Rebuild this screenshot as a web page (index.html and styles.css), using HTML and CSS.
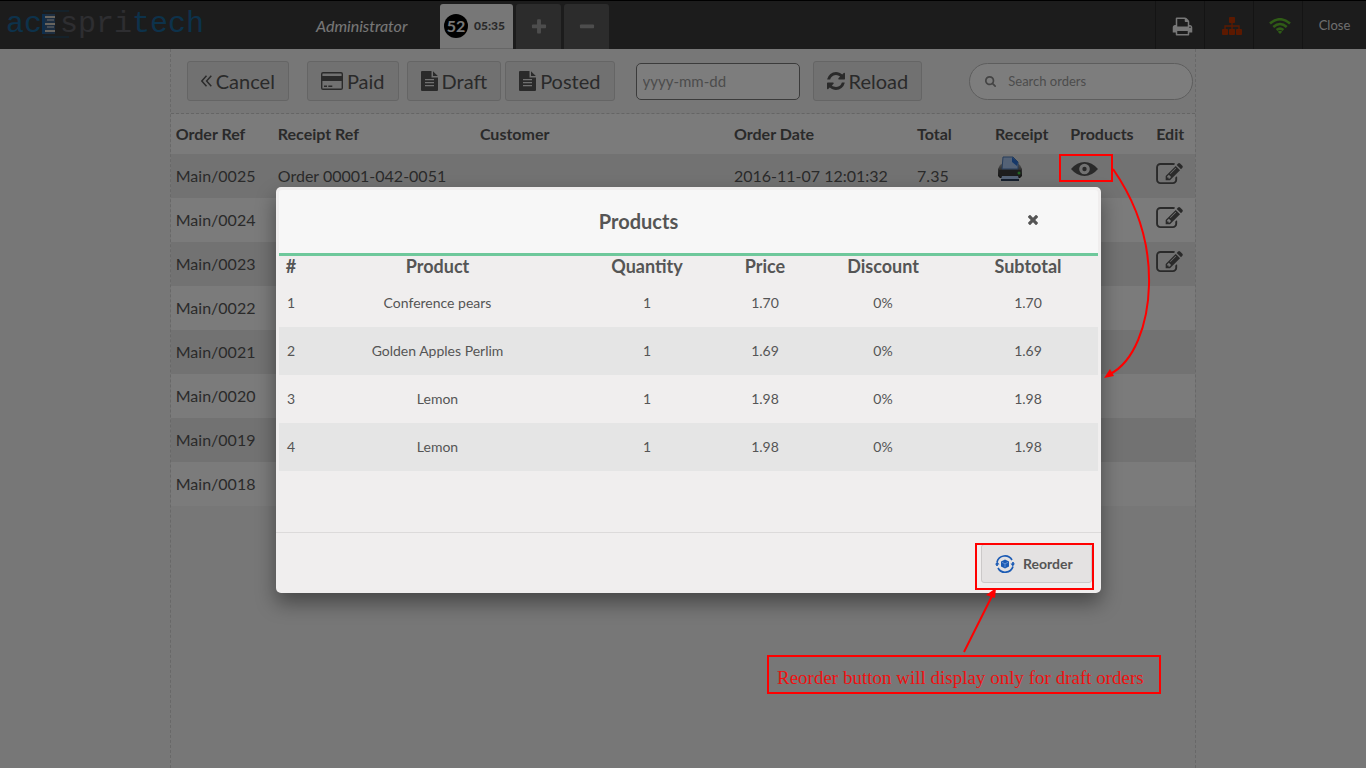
FILE: index.html
```html
<!DOCTYPE html>
<html lang="en">
<head>
<meta charset="utf-8">
<title>Point of Sale - Orders</title>
<link rel="stylesheet" href="styles.css">
</head>
<body>
<svg class="sprite" aria-hidden="true">
  <symbol id="i-plus" viewBox="0 0 1792 1792"><path d="M1600 736v192q0 40-28 68t-68 28h-416v416q0 40-28 68t-68 28h-192q-40 0-68-28t-28-68v-416h-416q-40 0-68-28t-28-68v-192q0-40 28-68t68-28h416v-416q0-40 28-68t68-28h192q40 0 68 28t28 68v416h416q40 0 68 28t28 68z"/></symbol>
  <symbol id="i-minus" viewBox="0 0 1792 1792"><path d="M1600 736v192q0 40-28 68t-68 28h-1216q-40 0-68-28t-28-68v-192q0-40 28-68t68-28h1216q40 0 68 28t28 68z"/></symbol>
  <symbol id="i-print" viewBox="0 0 1792 1792"><path d="M448 1536h896v-256h-896v256zm0-640h896v-384h-160q-40 0-68-28t-28-68v-160h-640v640zm1152 64q0-26-19-45t-45-19-45 19-19 45 19 45 45 19 45-19 19-45zm128 0v416q0 13-9.500 22.500t-22.500 9.500h-224v160q0 40-28 68t-68 28h-960q-40 0-68-28t-28-68v-160h-224q-13 0-22.500-9.500t-9.500-22.500v-416q0-79 56.500-135.500t135.500-56.500h64v-544q0-40 28-68t68-28h672q40 0 88 20t76 48l152 152q28 28 48 76t20 88v256h64q79 0 135.500 56.500t56.500 135.500z"/></symbol>
  <symbol id="i-edit" viewBox="0 128 1792 1536"><path d="M888 1184l116-116-152-152-116 116v56h96v96h56zm440-720q-16-16-33 1l-350 350q-17 17-1 33t33-1l350-350q17-17 1-33zm80 594v190q0 119-84.500 203.500t-203.500 84.500h-832q-119 0-203.500-84.500t-84.500-203.500v-832q0-119 84.500-203.500t203.500-84.500h832q63 0 117 25 15 7 18 23 3 17-9 29l-49 49q-14 14-32 8-23-6-45-6h-832q-66 0-113 47t-47 113v832q0 66 47 113t113 47h832q66 0 113-47t47-113v-126q0-13 9-22l64-64q15-15 35-7t20 29zm-96-738l288 288-672 672h-288v-288zm444 132l-92 92-288-288 92-92q28-28 68-28t68 28l152 152q28 28 28 68t-28 68z"/></symbol>
  <symbol id="i-refresh" viewBox="128 128 1536 1536"><path d="M1639 1056q0 5-1 7-64 268-268 434.500t-478 166.500q-146 0-282.500-55t-243.500-157l-129 129q-19 19-45 19t-45-19-19-45v-448q0-26 19-45t45-19h448q26 0 45 19t19 45-19 45l-137 137q71 66 161 102t187 36q134 0 250-65t186-179q11-17 53-117 8-23 30-23h192q13 0 22.500 9.500t9.500 22.500zm25-800v448q0 26-19 45t-45 19h-448q-26 0-45-19t-19-45 19-45l138-138q-148-137-349-137-134 0-250 65t-186 179q-11 17-53 117-8 23-30 23h-199q-13 0-22.500-9.500t-9.500-22.500v-7q65-268 270-434.500t480-166.500q146 0 284 55.500t245 156.500l130-129q19-19 45-19t45 19 19 45z"/></symbol>
  <symbol id="i-search" viewBox="64 128 1664 1664"><path d="M1216 832q0-185-131.500-316.500t-316.500-131.500-316.500 131.500-131.500 316.500 131.500 316.500 316.500 131.500 316.500-131.500 131.500-316.500zm512 832q0 52-38 90t-90 38q-54 0-90-38l-343-342q-179 124-399 124-143 0-273.500-55.500t-225-150-150-225-55.500-273.500 55.500-273.500 150-225 225-150 273.500-55.500 273.500 55.500 225 150 150 225 55.500 273.500q0 220-124 399l343 343q37 37 37 90z"/></symbol>
  <symbol id="i-times" viewBox="302 434 1188 1188"><path d="M1490 1322q0 40-28 68l-136 136q-28 28-68 28t-68-28l-294-294-294 294q-28 28-68 28t-68-28l-136-136q-28-28-28-68t28-68l294-294-294-294q-28-28-28-68t28-68l136-136q28-28 68-28t68 28l294 294 294-294q28-28 68-28t68 28l136 136q28 28 28 68t-28 68l-294 294 294 294q28 28 28 68z"/></symbol>
  <symbol id="i-sitemap" viewBox="0 0 20 18"><g><rect x="7" y="0" width="6" height="6" rx="1"/><rect x="0" y="12" width="6" height="6" rx="1"/><rect x="7" y="12" width="6" height="6" rx="1"/><rect x="14" y="12" width="6" height="6" rx="1"/></g><path d="M10 5v8M3 13V9h14v4" fill="none" stroke="currentColor" stroke-width="1.300"/></symbol>
  <symbol id="i-wifi" viewBox="0 0 22 16"><g fill="none" stroke="currentColor" stroke-width="2.600"><path d="M1 5.500Q11-3 21 5.500"/><path d="M4.300 8.900Q11 3.100 17.700 8.900"/><path d="M7.600 12Q11 9.300 14.400 12"/></g><path d="M8.800 13.700Q11 12 13.200 13.700L11 16z"/></symbol>
  <symbol id="i-angles" viewBox="0 0 11 12"><path d="M5.500 .7L.8 6l4.700 5.300M10.300 .7L5.600 6l4.700 5.300" fill="none" stroke="currentColor" stroke-width="1.500"/></symbol>
  <symbol id="i-card" viewBox="0 0 22 18"><path fill-rule="evenodd" d="M2 0h18a2 2 0 0 1 2 2v14a2 2 0 0 1-2 2H2a2 2 0 0 1-2-2V2a2 2 0 0 1 2-2zm-.6 4h19.200V2a.6.6 0 0 0-.6-.6H2a.6.6 0 0 0-.6.6zm0 5v7a.6.6 0 0 0 .6.600h18a.6.6 0 0 0 .6-.6V9zM3 13.500h3V15H3zm4.300 0h4V15h-4z"/></symbol>
  <symbol id="i-file" viewBox="0 0 17 20"><path fill-rule="evenodd" d="M1 0h9.500v6.500H17V19a1 1 0 0 1-1 1H1a1 1 0 0 1-1-1V1a1 1 0 0 1 1-1zm3 8v1.300h9V8zm0 3v1.300h9V11zm0 3v1.300h9V14z"/><path d="M12 .2L16.800 5H12z"/></symbol>
  <symbol id="i-eye" viewBox="0 0 27 14"><path fill-rule="evenodd" d="M0 7Q6 0 13.500 0T27 7Q21 14 13.500 14T0 7zm13.500-5.300a5.300 5.300 0 1 0 0 10.600 5.300 5.300 0 0 0 0-10.600z"/><circle cx="13.500" cy="7" r="2.200"/></symbol>
</svg>

<div class="pos">
  <header class="topbar">
    <div class="brand" aria-label="acespritech">
      <span class="blue">ac</span>
      <svg class="brand-mark" viewBox="0 0 28 28" aria-hidden="true">
        <path d="M1 1h26M1 27h26" stroke="#1c5076"/>
        <path d="M0 4h13v20H0z" fill="#385a80"/>
        <path d="M1 7h12M1 14h12M1 21h12" stroke="#d0c8bc" stroke-width="2"/>
        <path d="M5 10h7M5 17h7" stroke="#8b98aa" stroke-width="2"/>
        <path d="M0 4h3v20H0z" fill="#1d5c9a"/>
      </svg>
      <span class="gray">spri</span><span class="blue">tech</span>
    </div>
    <span class="user">Administrator</span>
    <nav class="tabs">
      <button class="tab tab-active"><span class="num">52</span><span class="time">05:35</span></button>
      <button class="tab" aria-label="New order"><svg class="ic18"><use href="#i-plus"/></svg></button>
      <button class="tab" aria-label="Delete order"><svg class="ic18"><use href="#i-minus"/></svg></button>
    </nav>
    <div class="status">
      <button class="cell print" aria-label="Print"><svg class="ic20"><use href="#i-print"/></svg></button>
      <button class="cell net" aria-label="Proxy"><svg class="ic-net"><use href="#i-sitemap"/></svg></button>
      <button class="cell wifi" aria-label="Connection"><svg class="ic-wifi"><use href="#i-wifi"/></svg></button>
      <button class="cell close">Close</button>
    </div>
  </header>

  <main class="orders">
    <div class="toolbar">
      <button class="btn cancel"><svg class="ic-angles"><use href="#i-angles"/></svg>Cancel</button>
      <button class="btn paid"><svg class="ic-card"><use href="#i-card"/></svg>Paid</button>
      <div class="pair">
        <button class="btn"><svg class="ic-file"><use href="#i-file"/></svg>Draft</button>
        <button class="btn"><svg class="ic-file"><use href="#i-file"/></svg>Posted</button>
      </div>
      <input class="date" type="text" placeholder="yyyy-mm-dd" aria-label="Order date">
      <button class="btn"><svg class="ic-refresh"><use href="#i-refresh"/></svg>Reload</button>
      <label class="search"><svg class="ic-search"><use href="#i-search"/></svg><input type="text" placeholder="Search orders" aria-label="Search orders"></label>
    </div>
    <table class="list">
      <colgroup><col class="c-ref"><col class="c-receipt"><col class="c-customer"><col class="c-date"><col class="c-total"><col class="c-print"><col class="c-products"><col class="c-edit"></colgroup>
      <thead><tr><th>Order Ref</th><th>Receipt Ref</th><th>Customer</th><th>Order Date</th><th>Total</th><th>Receipt</th><th>Products</th><th>Edit</th></tr></thead>
      <tbody>
        <tr><td>Main/0025</td><td>Order 00001-042-0051</td><td></td><td>2016-11-07 12:01:32</td><td>7.35</td>
          <td><button class="icon-btn receipt" aria-label="Print receipt"><svg viewBox="0 0 26 26" class="ic-receipt">
            <defs><linearGradient id="body" x2="0" y2="1"><stop offset="0" stop-color="#b0b0b0"/><stop offset=".5" stop-color="#555"/><stop offset="1" stop-color="#222"/></linearGradient></defs>
            <path d="M3 9l3-2h14l3 2 2 4v7l-2 2H3l-2-2v-7z" fill="url(#body)"/>
            <path d="M5 13L6 1h10l5 5v7z" fill="#a9c5ec" stroke="#4c79b5"/>
            <path d="M15 1v5l5 4 1-4z" fill="#2c71d2"/>
            <path d="M2 14h22v5l-1 2H3l-1-2z" fill="#3a3a3a"/>
            <path d="M5 20h16l1 3H4z" fill="#a9c5ec"/><path d="M4 24h18" stroke="#2b3d58" stroke-width="2"/>
            <circle cx="22" cy="17" r="1.500" fill="#47c847"/></svg></button></td>
          <td><button class="icon-btn eye" aria-label="Show products"><svg class="ic-eye"><use href="#i-eye"/></svg></button></td>
          <td><button class="icon-btn edit" aria-label="Edit"><svg class="ic-edit"><use href="#i-edit"/></svg></button></td></tr>
        <tr><td>Main/0024</td><td></td><td></td><td></td><td></td><td></td><td></td><td><button class="icon-btn edit" aria-label="Edit"><svg class="ic-edit"><use href="#i-edit"/></svg></button></td></tr>
        <tr><td>Main/0023</td><td></td><td></td><td></td><td></td><td></td><td></td><td><button class="icon-btn edit" aria-label="Edit"><svg class="ic-edit"><use href="#i-edit"/></svg></button></td></tr>
        <tr><td>Main/0022</td><td></td><td></td><td></td><td></td><td></td><td></td><td></td></tr>
        <tr><td>Main/0021</td><td></td><td></td><td></td><td></td><td></td><td></td><td></td></tr>
        <tr><td>Main/0020</td><td></td><td></td><td></td><td></td><td></td><td></td><td></td></tr>
        <tr><td>Main/0019</td><td></td><td></td><td></td><td></td><td></td><td></td><td></td></tr>
        <tr><td>Main/0018</td><td></td><td></td><td></td><td></td><td></td><td></td><td></td></tr>
      </tbody>
    </table>
  </main>
</div>

<div class="backdrop"></div>

<section class="popup" role="dialog" aria-labelledby="popup-title">
  <div class="popup-body">
    <header class="popup-head">
      <h2 id="popup-title">Products</h2>
      <button class="dismiss" aria-label="Close popup"><svg class="ic-times"><use href="#i-times"/></svg></button>
    </header>
    <table class="lines">
      <colgroup><col class="l-no"><col class="l-product"><col class="l-qty"><col class="l-price"><col class="l-disc"><col class="l-sub"></colgroup>
      <thead><tr><th>#</th><th>Product</th><th>Quantity</th><th>Price</th><th>Discount</th><th>Subtotal</th></tr></thead>
      <tbody>
        <tr><td>1</td><td>Conference pears</td><td>1</td><td>1.70</td><td>0%</td><td>1.70</td></tr>
        <tr><td>2</td><td>Golden Apples Perlim</td><td>1</td><td>1.69</td><td>0%</td><td>1.69</td></tr>
        <tr><td>3</td><td>Lemon</td><td>1</td><td>1.98</td><td>0%</td><td>1.98</td></tr>
        <tr><td>4</td><td>Lemon</td><td>1</td><td>1.98</td><td>0%</td><td>1.98</td></tr>
      </tbody>
    </table>
  </div>
  <footer class="popup-foot">
    <button class="reorder">
      <svg class="ic-reorder" viewBox="0 0 20 20" aria-hidden="true">
        <g fill="none" stroke="#1c5bb4" stroke-width="1.700"><path d="M2 8a8.200 8.200 0 0 1 15-2M18 8v2"/><path d="M18 12.500A8.200 8.200 0 0 1 3 14M2 12v-2"/></g>
        <path d="M15.500 9.500h4.500l-2.200 3zM0 10.500h4.500L2.200 7.500z" fill="#1c5bb4"/>
        <path d="M10 5.500l4 2v5l-4 2-4-2v-5z" fill="#1c5bb4"/><path d="M7 8.300l3 1.500 3-1.500M10 9.800v3.500" fill="none" stroke="#6e9bdb" stroke-width=".8"/>
      </svg>Reorder</button>
  </footer>
</section>

<div class="notes">
  <svg class="marks" viewBox="0 0 1366 768" aria-hidden="true">
    <g fill="none" stroke="red" stroke-width="2">
      <rect x="1060" y="155" width="52" height="26"/>
      <rect x="976" y="544" width="117" height="45"/>
      <path d="M1113 169C1138 205 1150 245 1149 285C1148 325 1134 362 1110 374"/>
      <path d="M964 652L992 596"/>
    </g>
    <path d="M1104 378L1110 369 1114 376z" fill="red"/>
    <path d="M996 588L986 595 995 598z" fill="red"/>
  </svg>
  <p class="note">Reorder button will display only for draft orders</p>
</div>
</body>
</html>
```
FILE: styles.css
```css
* { box-sizing: border-box; }
body {
  margin: 0;
  position: relative;
  min-height: 100vh;
  overflow: hidden;
  font-family: Lato, "Liberation Sans", sans-serif;
  color: #555;
  background: #eee;
}
button, input { font: inherit; color: inherit; }
button { margin: 0; padding: 0; border: 0; background: none; cursor: pointer; }
svg { display: block; flex: none; fill: currentColor; }
.sprite { position: absolute; width: 0; height: 0; }
.pos { display: flex; flex-direction: column; min-height: 100vh; }

/* Top bar */
.topbar {
  display: flex;
  height: 49px;
  border-top: 1px solid #000;
  background: #393939;
  color: #eee;
}
.brand {
  display: flex;
  align-items: center;
  width: 310px;
  padding: 0 0 3px 6px;
  font: 30px/40px "Liberation Mono", monospace;
}
.brand-mark { width: 28px; height: 28px; margin-right: -10px; }
.blue { color: #1a6496; }
.gray { color: #5c5c62; }
.user { width: 130px; padding: 14px 0 0 6px; font-size: 16px; line-height: 22px; font-style: italic; }
.tabs { display: flex; align-items: flex-end; gap: 3px; }
.tab {
  display: flex;
  align-items: center;
  justify-content: center;
  width: 45px;
  height: 45px;
  border-radius: 3px 3px 0 0;
  background: #585858;
  color: #9b9b9b;
}
.tab-active {
  justify-content: flex-start;
  gap: 6px;
  width: 73px;
  padding-left: 4px;
  background: #eee;
  border-bottom: 1px solid #ccc;
  color: #555;
}
.num {
  width: 24px;
  height: 24px;
  border-radius: 50%;
  background: #000;
  color: #eee;
  font-size: 16px;
  line-height: 24px;
  font-weight: bold;
}
.time { font-size: 12px; line-height: 22px; font-weight: 900; }
.status { display: flex; margin-left: auto; }
.cell {
  display: flex;
  align-items: center;
  justify-content: center;
  width: 49px;
  padding-top: 2px;
  padding-left: 4px;
  border-left: 1px solid #292929;
}
.net { color: #b83300; padding-left: 6px; }
.wifi { color: #5fb82c; }
.close { width: 64px; padding: 0; font-size: 13px; color: #ddd; }
.ic18 { width: 18px; height: 18px; }
.ic20 { width: 21px; height: 21px; }
.ic-net { width: 20px; height: 18px; }
.ic-wifi { width: 22px; height: 16px; }

/* Order list */
.orders {
  flex: 1;
  box-sizing: content-box;
  width: 75%;
  margin: 0 auto;
  border: dashed #d0d0d0;
  border-width: 0 1px;
}
.toolbar {
  display: flex;
  align-items: center;
  height: 65px;
  padding: 0 2px 0 16px;
  border-bottom: 1px dashed #cbcbcb;
}
.btn {
  display: flex;
  align-items: center;
  gap: 4px;
  height: 40px;
  padding: 0 13px;
  border: 1px solid #cacaca;
  border-radius: 3px;
  background: #e2e2e2;
  font-size: 20px;
  line-height: 24px;
}
.paid { margin: 0 8px 0 18px; }
.pair { display: flex; gap: 4px; }
.ic-angles { width: 11px; height: 12px; }
.ic-card { width: 22px; height: 18px; }
.ic-file { width: 17px; height: 20px; }
.ic-refresh { width: 18px; height: 18px; }
.date {
  width: 164px;
  height: 37px;
  margin: 0 13px 0 21px;
  padding: 0 6px;
  border: 1px solid #777;
  border-radius: 5px;
  background: #fbfbfb;
  font-size: 15px;
}
.search {
  display: flex;
  align-items: center;
  gap: 12px;
  width: 224px;
  height: 37px;
  margin-left: auto;
  padding: 0 15px;
  border: 1px solid #bbb;
  border-radius: 19px;
  background: #fbfbfb;
  color: #888;
}
.search input { width: 100%; min-width: 0; padding: 0; border: 0; outline: 0; background: none; font-size: 13px; }
::placeholder { color: #999; opacity: 1; }
.ic-search { width: 11px; height: 11px; }
.list { width: 100%; border-collapse: collapse; table-layout: fixed; font-size: 16px; line-height: 20px; }
.list th, .list td { padding: 0 5px; text-align: left; white-space: nowrap; }
.list tr { background: #f6f6f6; }
.list th { height: 40px; }
.list td { height: 44px; vertical-align: top; padding-top: 12px; }
.list tbody tr:nth-child(odd) { background: #e5e5e5; }
.c-ref { width: 102px; }
.c-receipt { width: 202px; }
.c-customer { width: 254px; }
.c-date { width: 183px; }
.c-total { width: 78px; }
.c-print { width: 75px; }
.c-products { width: 86px; }
.c-edit { width: 44px; }
.list td:nth-child(n+6) { padding-top: 0; }
.icon-btn { display: block; }
.receipt { padding: 2px 0 0 2px; }
.eye { padding: 8px 0 0 1px; }
.edit { padding-top: 9px; }
.ic-receipt { width: 26px; height: 26px; }
.ic-eye { width: 27px; height: 14px; }
.ic-edit { width: 27px; height: 23px; }

.backdrop { position: absolute; inset: 0; background: rgba(0, 0, 0, .5); }

/* Products popup */
.popup {
  position: absolute;
  top: 187px;
  left: calc(50% - 407px);
  width: 825px;
  border-radius: 5px;
  background: #f0eeee;
  box-shadow: 0 10px 20px rgba(0, 0, 0, .4);
}
.popup-body { min-height: 345px; padding: 3px 3px 0; }
.popup-head {
  display: flex;
  align-items: center;
  height: 66px;
  padding-bottom: 2px;
  border-bottom: 3px solid #6ec89b;
  border-radius: 3px 3px 0 0;
  background: #f7f7f7;
}
.popup-head h2 { flex: 1; margin: 0; font-size: 20px; line-height: 24px; text-align: center; }
.dismiss { display: flex; justify-content: center; width: 20px; margin: 0 55px 0 25px; padding: 4px 0; }
.ic-times { width: 10px; height: 11px; }
.lines { width: 100%; border-collapse: collapse; table-layout: fixed; font-size: 14px; text-align: center; }
.lines th { height: 23px; padding: 0 0 2px; font-size: 18px; line-height: 21px; }
.lines td { height: 48px; padding: 0 0 2px; }
.lines tbody tr:nth-child(even) { background: #e5e5e5; }
.l-no { width: 24px; }
.l-product { width: 269px; }
.l-qty { width: 150px; }
.l-price { width: 86px; }
.l-disc { width: 150px; }
.l-sub { width: 140px; }
.popup-foot { display: flex; justify-content: flex-end; height: 61px; padding: 11px 9px 10px; border-top: 1px solid #dcdada; }
.reorder {
  display: flex;
  align-items: center;
  gap: 8px;
  width: 111px;
  padding-left: 13px;
  border: 1px solid #cbc9c9;
  border-radius: 3px;
  background: #e4e2e2;
  font-size: 14px;
  font-weight: bold;
}
.ic-reorder { width: 20px; height: 20px; }

/* Callouts drawn over the screen */
.notes { position: absolute; top: 0; left: calc(50% - 683px); width: 1366px; height: 768px; pointer-events: none; }
.marks { width: 100%; height: 100%; }
.note {
  position: absolute;
  top: 655px;
  left: 767px;
  margin: 0;
  padding: 8px 15px 2px 8px;
  border: 2px solid red;
  color: #f01010;
  font: 19px/25px "Liberation Serif", serif;
  white-space: nowrap;
}
```
